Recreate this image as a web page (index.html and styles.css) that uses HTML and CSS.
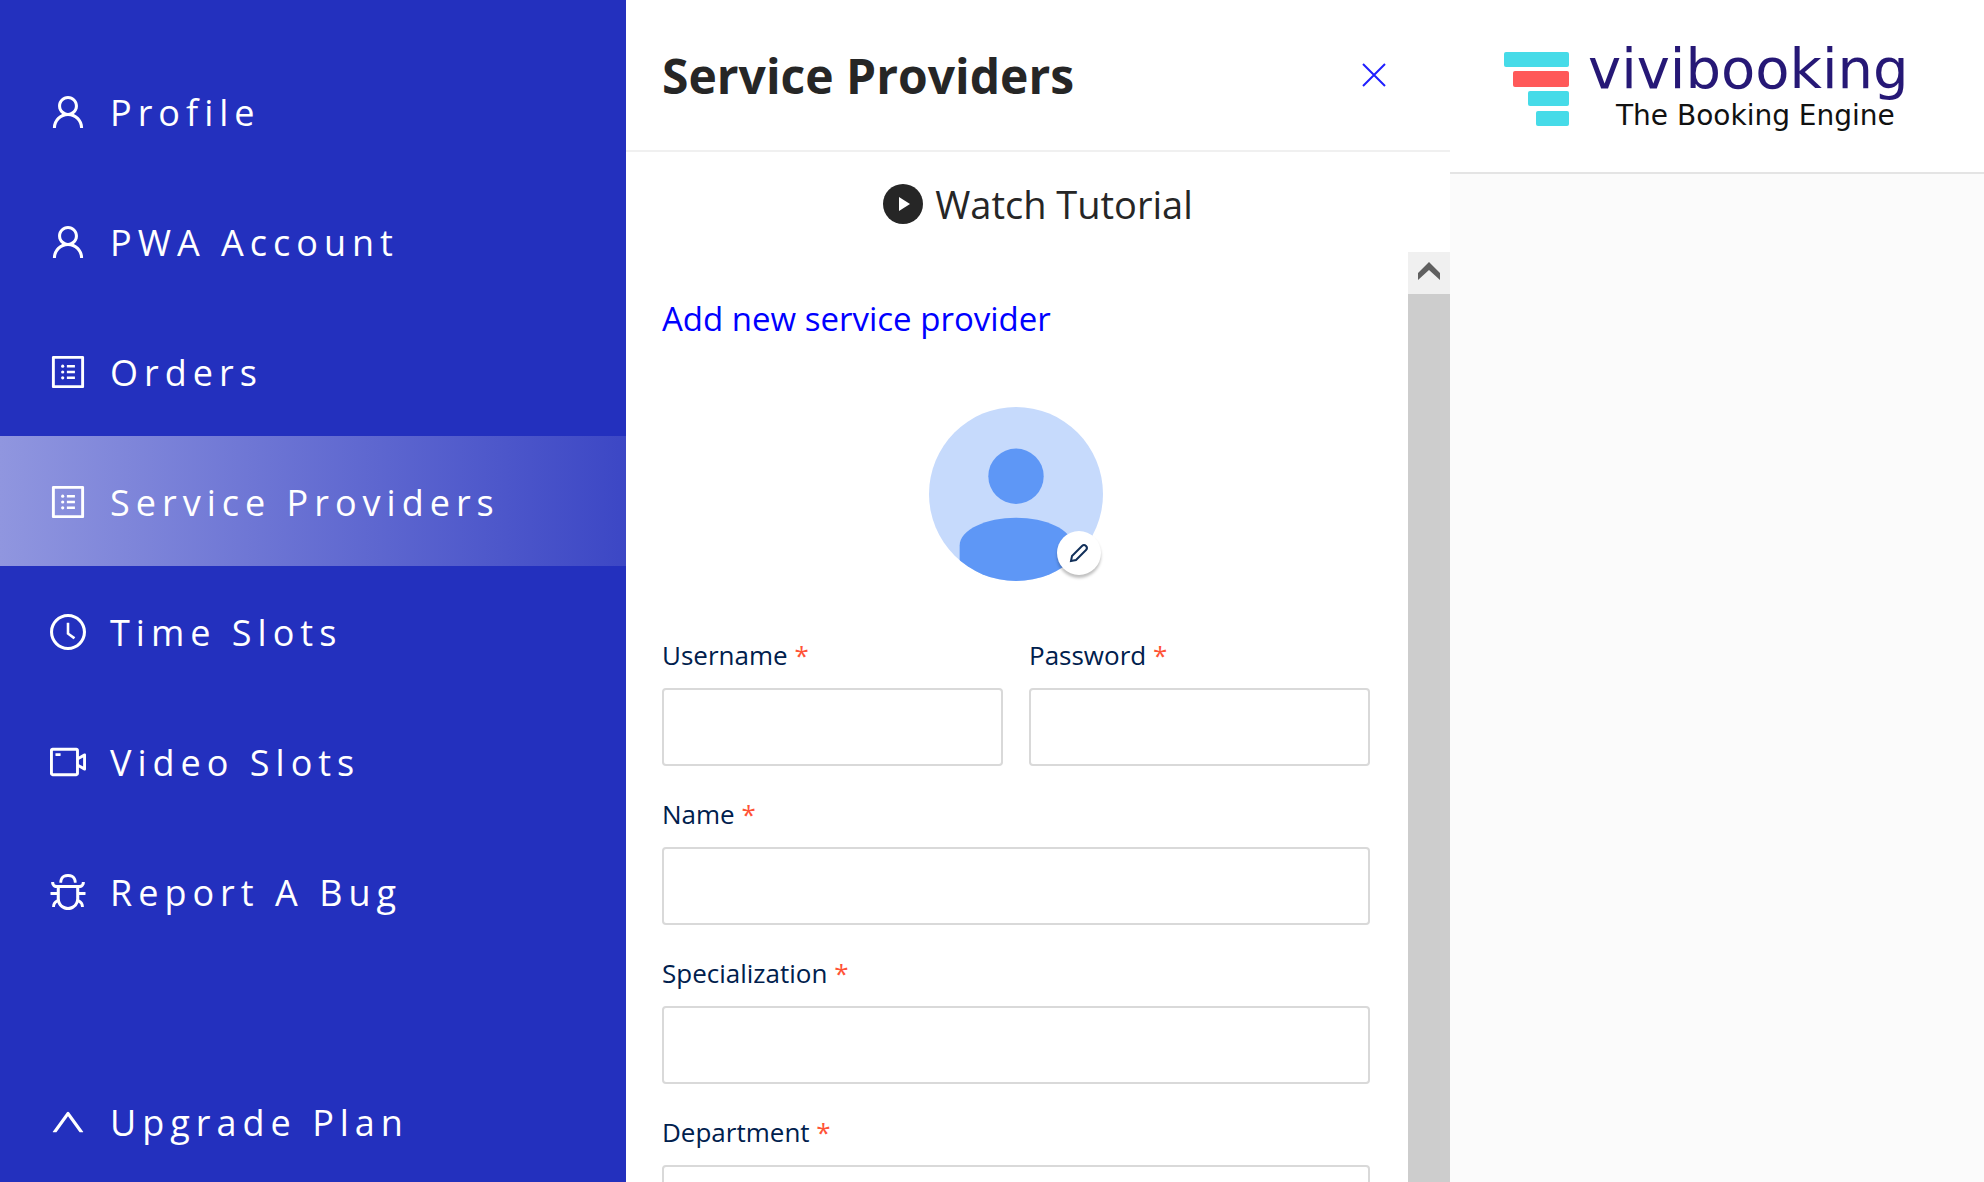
FILE: index.html
```html
<!DOCTYPE html>
<html lang="en">
<head>
<meta charset="utf-8">
<meta name="viewport" content="width=device-width, initial-scale=1">
<title>Service Providers - vivibooking</title>
<link rel="stylesheet" href="styles.css">
</head>
<body>
<svg class="sprite" aria-hidden="true">
  <symbol id="icon-user" viewBox="64 64 896 896"><path d="M858.5 763.6a374 374 0 0 0-80.6-119.5 375.63 375.63 0 0 0-119.5-80.6c-.4-.2-.8-.3-1.2-.5C719.5 518 760 444.7 760 362c0-137-111-248-248-248S264 225 264 362c0 82.700 40.500 156 102.800 201.100-.4.2-.8.300-1.200.500-44.800 18.900-85 46-119.500 80.600a375.630 375.630 0 0 0-80.600 119.500A371.700 371.700 0 0 0 136 901.800a8 8 0 0 0 8 8.200h60c4.400 0 7.900-3.500 8-7.800 2-77.200 33-149.500 87.800-204.300 56.700-56.700 132-87.900 212.200-87.900s155.500 31.200 212.200 87.900C779 752.700 810 825 812 902.200c.1 4.400 3.600 7.800 8 7.800h60a8 8 0 0 0 8-8.200c-1-47.800-10.900-94.300-29.500-138.200zM512 534c-45.900 0-89.100-17.900-121.600-50.400S340 407.900 340 362c0-45.900 17.900-89.100 50.400-121.600S466.100 190 512 190s89.100 17.900 121.600 50.400S684 316.100 684 362c0 45.900-17.900 89.100-50.400 121.600S557.900 534 512 534z"/></symbol>
  <symbol id="icon-list" viewBox="64 64 896 896"><path d="M880 112H144c-17.700 0-32 14.300-32 32v736c0 17.700 14.300 32 32 32h736c17.700 0 32-14.300 32-32V144c0-17.700-14.300-32-32-32zm-40 728H184V184h656v656zM484 336h200v64H484zM484 480h200v64H484zM484 624h200v64H484z"/><circle cx="380" cy="368" r="40"/><circle cx="380" cy="512" r="40"/><circle cx="380" cy="656" r="40"/></symbol>
  <symbol id="icon-clock" viewBox="64 64 896 896"><path d="M512 64C264.600 64 64 264.600 64 512s200.600 448 448 448 448-200.600 448-448S759.400 64 512 64zm0 820c-205.400 0-372-166.600-372-372s166.600-372 372-372 372 166.600 372 372-166.600 372-372 372z"/><path d="M686.700 638.600L544.100 535.500V288c0-4.400-3.600-8-8-8H488c-4.400 0-8 3.600-8 8v275.400c0 2.600 1.200 5 3.300 6.500l165.400 120.600c3.600 2.600 8.600 1.800 11.200-1.700l28.600-39c2.600-3.700 1.800-8.700-1.800-11.200z"/></symbol>
  <symbol id="icon-video" viewBox="64 64 896 896"><path d="M912 302.300L784 376V224c0-35.300-28.700-64-64-64H128c-35.300 0-64 28.700-64 64v576c0 35.300 28.700 64 64 64h592c35.300 0 64-28.700 64-64V648l128 73.700c21.300 12.300 48-3.100 48-27.600V330c0-24.600-26.700-40-48-27.700zM712 792H136V232h576v560zm176-167l-104-59.800V458.900L888 399v226zM208 360h112c4.400 0 8-3.600 8-8v-48c0-4.400-3.600-8-8-8H208c-4.400 0-8 3.600-8 8v48c0 4.400 3.600 8 8 8z"/></symbol>
  <symbol id="icon-bug" viewBox="64 64 896 896"><path d="M304 280h56c4.400 0 8-3.600 8-8 0-28.300 5.900-53.200 17.100-73.500 10.600-19.400 26-34.800 45.400-45.400C450.900 142 475.700 136 504 136h16c28.300 0 53.200 5.900 73.500 17.100 19.400 10.600 34.800 26 45.400 45.400C650 218.900 656 243.700 656 272c0 4.400 3.600 8 8 8h56c4.400 0 8-3.600 8-8 0-40-8.800-76.700-25.900-108.100a184.310 184.310 0 0 0-74-74C596.700 72.800 560 64 520 64h-16c-40 0-76.700 8.800-108.100 25.900a184.310 184.310 0 0 0-74 74C304.800 195.300 296 232 296 272c0 4.400 3.600 8 8 8z"/><path d="M940 512H792V412c76.800 0 139-62.200 139-139 0-4.400-3.600-8-8-8h-60c-4.400 0-8 3.600-8 8a63 63 0 0 1-63 63H232a63 63 0 0 1-63-63c0-4.400-3.600-8-8-8h-60c-4.400 0-8 3.600-8 8 0 76.800 62.200 139 139 139v100H84c-4.400 0-8 3.600-8 8v56c0 4.400 3.600 8 8 8h148v96c0 6.500.2 13 .7 19.300C164.100 728.600 116 796.700 116 876c0 4.400 3.600 8 8 8h56c4.400 0 8-3.600 8-8 0-44.200 23.900-82.900 59.600-103.700a273 273 0 0 0 22.700 49c24.300 41.500 59 76.200 100.500 100.500S460.500 960 512 960s99.800-13.900 141.300-38.200a281.380 281.380 0 0 0 123.200-149.500A120 120 0 0 1 836 876c0 4.400 3.600 8 8 8h56c4.400 0 8-3.600 8-8 0-79.300-48.100-147.400-116.700-176.700.4-6.400.7-12.800.7-19.300v-96h148c4.400 0 8-3.600 8-8v-56c0-4.400-3.600-8-8-8zM716 680c0 36.800-9.700 72-27.800 102.900-17.700 30.300-43 55.600-73.300 73.300C584 874.300 548.800 884 512 884s-72-9.700-102.900-27.800c-30.300-17.700-55.600-43-73.300-73.300A202.750 202.750 0 0 1 308 680V412h408v268z"/></symbol>
  <symbol id="icon-up" viewBox="64 64 896 896"><path d="M890.500 755.300L537.900 269.200c-12.800-17.600-39-17.600-51.700 0L133.500 755.300A8 8 0 0 0 140 768h75c5.100 0 9.900-2.500 12.900-6.600L512 369.800l284.100 391.600c3 4.100 7.800 6.600 12.900 6.600h75c6.500 0 10.300-7.400 6.500-12.700z"/></symbol>
</svg>

<div class="app">
  <nav class="sidebar" aria-label="Main">
    <a class="nav-item" href="#profile"><svg class="nav-icon"><use href="#icon-user"/></svg>Profile</a>
    <a class="nav-item" href="#pwa"><svg class="nav-icon"><use href="#icon-user"/></svg>PWA Account</a>
    <a class="nav-item" href="#orders"><svg class="nav-icon"><use href="#icon-list"/></svg>Orders</a>
    <a class="nav-item nav-item-active" href="#providers" aria-current="page"><svg class="nav-icon"><use href="#icon-list"/></svg>Service Providers</a>
    <a class="nav-item" href="#time"><svg class="nav-icon"><use href="#icon-clock"/></svg>Time Slots</a>
    <a class="nav-item" href="#video"><svg class="nav-icon"><use href="#icon-video"/></svg>Video Slots</a>
    <a class="nav-item" href="#bug"><svg class="nav-icon"><use href="#icon-bug"/></svg>Report A Bug</a>
    <a class="nav-item nav-item-upgrade" href="#upgrade"><svg class="nav-icon"><use href="#icon-up"/></svg>Upgrade Plan</a>
  </nav>

  <section class="drawer">
    <header class="drawer-header">
      <h1 class="drawer-title">Service Providers</h1>
      <button class="close" type="button" aria-label="Close"><svg class="close-icon" viewBox="0 0 24 24"><path d="M1 1L23 23M23 1L1 23"/></svg></button>
    </header>
    <a class="tutorial" href="#tutorial">
      <svg class="tutorial-icon" viewBox="0 0 40 40"><circle cx="20" cy="20" r="20"/><path d="M16 13L27 20L16 27Z"/></svg>
      Watch Tutorial
    </a>
    <div class="drawer-body">
      <form class="form">
        <a class="add-link" href="#add">Add new service provider</a>
        <div class="avatar">
          <svg class="avatar-image" viewBox="0 0 176 176" role="img" aria-label="Provider photo">
            <defs><clipPath id="round"><circle cx="88" cy="88" r="88"/></clipPath></defs>
            <g clip-path="url(#round)">
              <rect width="176" height="176" fill="#c6dafc"/>
              <circle cx="88" cy="70" r="28" fill="#5e97f6"/>
              <path d="M31 176V140C31 124 58 112 88 112S145 124 145 140V176Z" fill="#5e97f6"/>
            </g>
          </svg>
          <button class="avatar-edit" type="button" aria-label="Edit photo"><svg class="pencil" viewBox="0 0 20 20"><path d="M2 18L3 13L13 3Q15 1 17 3Q19 5 17 7L7 17Z"/></svg></button>
        </div>
        <div class="fields">
          <div class="field"><label class="label" for="username">Username <span class="required">*</span></label><input class="input" id="username" type="text"></div>
          <div class="field"><label class="label" for="password">Password <span class="required">*</span></label><input class="input" id="password" type="password"></div>
          <div class="field field-wide"><label class="label" for="name">Name <span class="required">*</span></label><input class="input" id="name" type="text"></div>
          <div class="field field-wide"><label class="label" for="specialization">Specialization <span class="required">*</span></label><input class="input" id="specialization" type="text"></div>
          <div class="field field-wide"><label class="label" for="department">Department <span class="required">*</span></label><input class="input" id="department" type="text"></div>
        </div>
      </form>
      <div class="scrollbar" aria-hidden="true">
        <div class="scroll-button"><svg class="scroll-arrow" viewBox="0 0 22 18"><path d="M0 11L11 0L22 11V18L11 8L0 18Z"/></svg></div>
        <div class="scroll-thumb"></div>
      </div>
    </div>
  </section>

  <main class="main">
    <header class="topbar">
      <a class="logo" href="#home">
        <svg class="logo-mark" viewBox="0 0 65 74">
          <g fill="#46dbe8"><rect width="65" height="15" rx="2"/><rect x="24" y="39" width="41" height="15" rx="2"/><rect x="32" y="59" width="33" height="15" rx="2"/></g>
          <rect x="9" y="19" width="56" height="16" rx="2" fill="#ff5959"/>
        </svg>
        <span class="logo-text"><span class="logo-name">vivibooking</span><span class="logo-tagline">The Booking Engine</span></span>
      </a>
    </header>
  </main>
</div>
</body>
</html>
```

FILE: styles.css
```css
* {
  box-sizing: border-box;
}

body {
  margin: 0;
  font-family: "Open Sans", "Noto Sans", sans-serif;
  color: #262626;
}

a {
  text-decoration: none;
}

button {
  padding: 0;
  border: 0;
  cursor: pointer;
}

.sprite {
  display: none;
}

.app {
  display: flex;
  height: 100vh;
  overflow: hidden;
}

/* Sidebar */
.sidebar {
  flex: 0 0 626px;
  padding-top: 46px;
  background: #2330be;
  overflow: hidden;
}

.nav-item {
  display: flex;
  align-items: center;
  gap: 24px;
  height: 130px;
  padding: 2px 0 0 50px;
  color: #fff;
  font-size: 36px;
  letter-spacing: 6px;
  white-space: nowrap;
}

.nav-item-active {
  background: linear-gradient(90deg, #9096df, #3c47c5);
}

.nav-item-upgrade {
  margin-top: 100px;
}

.nav-icon {
  width: 36px;
  height: 36px;
  fill: currentColor;
}

/* Drawer */
.drawer {
  display: flex;
  flex-direction: column;
  flex: 0 0 824px;
  background: #fff;
}

.drawer-header {
  display: flex;
  flex: none;
  align-items: center;
  justify-content: space-between;
  height: 152px;
  padding: 0 64px 0 36px;
  border-bottom: 2px solid #f0f0f0;
}

.drawer-title {
  margin: 0;
  font-size: 48px;
  font-weight: 700;
}

.close {
  display: flex;
  background: none;
}

.close-icon {
  width: 24px;
  height: 24px;
  fill: none;
  stroke: #1f1fff;
  stroke-width: 2;
}

.tutorial {
  display: flex;
  flex: none;
  align-items: center;
  justify-content: center;
  gap: 12px;
  height: 100px;
  padding-top: 4px;
  color: #262626;
  font-size: 38px;
}

.tutorial-icon {
  width: 40px;
  height: 40px;
}

.tutorial-icon circle {
  fill: #262626;
}

.tutorial-icon path {
  fill: #fff;
}

.drawer-body {
  display: flex;
  flex: 1;
  min-height: 0;
}

.form {
  flex: 1;
  padding: 41px 38px 0 36px;
  overflow: hidden;
}

.add-link {
  display: block;
  color: #0000ff;
  font-size: 33px;
  line-height: 52px;
}

.avatar {
  position: relative;
  width: 174px;
  height: 174px;
  margin: 62px auto 57px;
}

.avatar-image {
  display: block;
}

.avatar-edit {
  position: absolute;
  right: 2px;
  bottom: 6px;
  display: flex;
  align-items: center;
  justify-content: center;
  width: 44px;
  height: 44px;
  border-radius: 50%;
  background: #fff;
  box-shadow: 0 3px 3px rgba(0, 0, 0, 0.25);
}

.pencil {
  width: 20px;
  height: 20px;
  fill: none;
  stroke: #12305a;
  stroke-width: 2;
}

.fields {
  display: grid;
  grid-template-columns: 1fr 1fr;
  gap: 31px 26px;
}

.field-wide {
  grid-column: 1 / -1;
}

.label {
  display: block;
  margin-bottom: 16px;
  color: #00204d;
  font-size: 26px;
  line-height: 34px;
}

.required {
  color: #ff5336;
}

.input {
  display: block;
  width: 100%;
  height: 78px;
  padding: 0 20px;
  border: 2px solid #d9d9d9;
  border-radius: 4px;
  background: #fff;
  font: inherit;
  font-size: 26px;
}

.scrollbar {
  display: flex;
  flex: 0 0 42px;
  flex-direction: column;
}

.scroll-button {
  display: flex;
  align-items: center;
  justify-content: center;
  height: 42px;
  padding-bottom: 4px;
  background: #f0f0f0;
}

.scroll-arrow {
  width: 22px;
  height: 18px;
  fill: #606060;
}

.scroll-thumb {
  flex: 1;
  background: #cdcdcd;
}

/* Page behind the drawer */
.main {
  flex: 1;
  min-width: 0;
  background: #fbfbfb;
}

.topbar {
  height: 174px;
  padding: 38px 0 0 54px;
  border-bottom: 2px solid #e4e4e4;
  background: #fff;
}

.logo {
  display: flex;
  gap: 19px;
}

.logo-mark {
  flex: none;
  width: 65px;
  height: 74px;
  margin-top: 14px;
}

.logo-text {
  display: flex;
  flex-direction: column;
  font-family: "DejaVu Sans", sans-serif;
}

.logo-name {
  color: #261876;
  font-size: 56px;
  line-height: 62px;
}

.logo-tagline {
  padding-left: 28px;
  color: #111;
  font-size: 28px;
  line-height: 32px;
}
```
